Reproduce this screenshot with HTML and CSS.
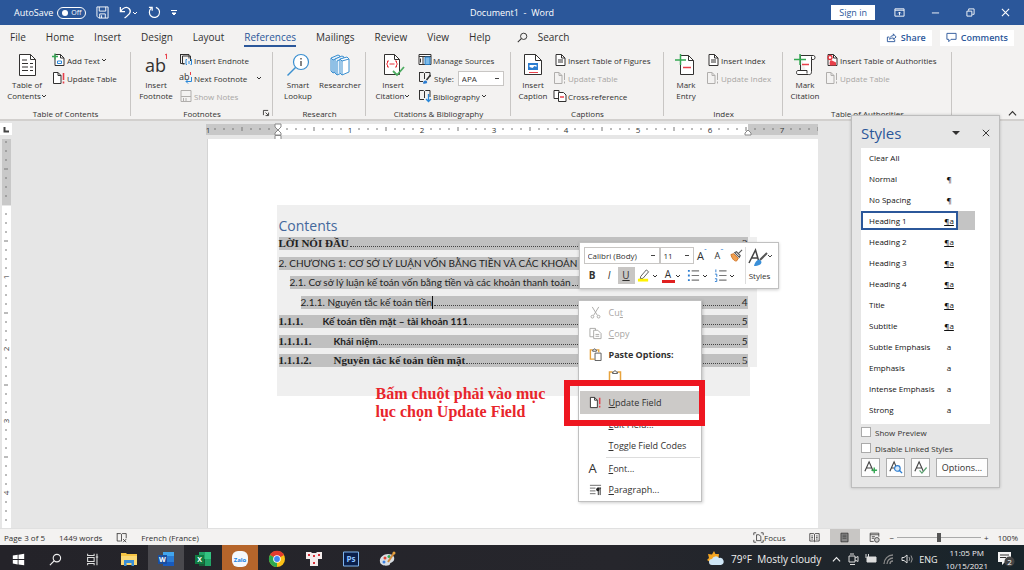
FILE: index.html
```html
<!DOCTYPE html>
<html lang="en">
<head>
<meta charset="utf-8">
<title>Document1 - Word</title>
<link rel="stylesheet" href="styles.css">
</head>
<body>
<svg class="defs" aria-hidden="true">
  <defs>
    <symbol id="doc" viewBox="0 0 14 14"><path d="M3 1.500h5.500L12 5v7.500H3z" fill="#fff" stroke="currentColor"/><path d="M8.500 1.500V5H12" fill="none" stroke="currentColor"/></symbol>
    <symbol id="doc-lines" viewBox="0 0 14 14"><use href="#doc"/><path d="M5 7h5M5 9h5" stroke="currentColor"/></symbol>
    <symbol id="doc-plus" viewBox="0 0 14 14"><use href="#doc"/><path d="M5.500 8h4v2.500h-4z" fill="none" stroke="#2b88d8"/><path d="M0 3.500h6M3 .5v6" stroke="#35a853" stroke-width="1.300"/></symbol>
    <symbol id="doc-update" viewBox="0 0 14 14"><path d="M1.500 1.500h4.500L9 4.500v8H1.500z" fill="#fff" stroke="currentColor"/><path d="M6 1.500v3h3" fill="none" stroke="currentColor"/><path d="M11.500 2v7M11.500 10.500v2" stroke="#e8404a" stroke-width="1.600"/></symbol>
    <symbol id="doc-update-off" viewBox="0 0 14 14"><path d="M1.500 1.500h4.500L9 4.500v8H1.500zM6 1.500v3h3M11.500 2v7M11.500 10.500v2" fill="none" stroke="#b0aeac"/></symbol>
    <symbol id="endnote" viewBox="0 0 14 14"><path d="M1 1.500h9v4M1.500 1v9.500h4M3.500 3h8v5M3.500 3v8h2" fill="none" stroke="currentColor"/><path d="M8 6.500H7v5h1M11.500 6.500h1v5h-1M10 8v3" fill="none" stroke="#2b88d8"/></symbol>
    <symbol id="nextnote" viewBox="0 0 14 14"><text x="0" y="9" font-size="9" fill="currentColor">ab</text><path d="M11.500 1v3" stroke="#e8404a"/><path d="M12.500 6v4.500H7M9 8.500l-2 2 2 2" fill="none" stroke="#2b88d8"/></symbol>
    <symbol id="shownotes" viewBox="0 0 14 14"><path d="M2 1.500h10v11H2zM2 7.500h10M4.500 9v3M7 9v3" fill="none" stroke="#b0aeac"/></symbol>
    <symbol id="manage" viewBox="0 0 14 14"><path d="M1 1.500h12v10H1zM1 3.500h12M5 3.500v8" fill="#fff" stroke="currentColor"/><path d="M7 4h5v7.500H7z" fill="#7cbbea" stroke="#2b7cc0"/><path d="M2.500 5.500v4" stroke="currentColor"/></symbol>
    <symbol id="style" viewBox="0 0 14 14"><path d="M1 1.500h4.500l1 1 1-1H12V6M1.500 1.500v9H5M6.500 2.500V8" fill="none" stroke="currentColor"/><path d="M12.500 4l-4 5" stroke="currentColor" stroke-width="1.500"/><path d="M5 12.500c0-3 3-4 4-2s-2 2.500-4 2z" fill="#2b7cd0"/></symbol>
    <symbol id="biblio" viewBox="0 0 14 14"><path d="M1 1.500h4.500l1 1 1-1H12V8M1.500 1.500v9H6M6.500 2.500V9" fill="none" stroke="currentColor"/><path d="M10.500 5v7.500M8 10l2.500 2.500L13 10" fill="none" stroke="#2b88d8" stroke-width="1.300"/></symbol>
    <symbol id="crossref" viewBox="0 0 14 14"><path d="M1 1.500h5v8H1z" fill="#fff" stroke="currentColor"/><path d="M5.500 3.500h5L13 6v6.500H5.500z" fill="#fff" stroke="currentColor"/><path d="M7 8h4" stroke="#e8404a" stroke-width="1.500"/></symbol>
    <symbol id="toa" viewBox="0 0 14 14"><use href="#doc"/><circle cx="5" cy="4.500" r="2" fill="none" stroke="#e8303a" stroke-width="1.300"/><path d="M5 12.500c-1-3 0-6 2-5l4 2v3z" fill="#e8404a"/></symbol>
    <symbol id="toc-big" viewBox="0 0 24 24"><path d="M4.500 1.500h11l5 5v16h-16z" fill="#fff" stroke="currentColor"/><path d="M15.500 1.500v5h5" fill="none" stroke="currentColor"/><path d="M7 7h5M7 10.500h6M7 14h6M7 17.500h6M15 10.500h3M15 14h3M15 17.500h3" stroke="currentColor"/></symbol>
    <symbol id="lens-big" viewBox="0 0 24 24"><circle cx="15" cy="9" r="7.500" fill="#fff" stroke="#3a8fd0" stroke-width="1.200"/><path d="M9.500 14.500L1.500 22.500" stroke="#3a8fd0" stroke-width="1.500"/><path d="M15 8v5M15 5v1.500" stroke="currentColor" stroke-width="1.200"/></symbol>
    <symbol id="books-big" viewBox="0 0 24 24"><path d="M3 5l7-3 2 1v14l-7 3-2-2zM3 5l2 2v13M5 7l7-3" fill="#e5f1fb" stroke="#3a8fd0"/><path d="M7 6l7-3 2 1v15l-7 3-2-2zM9 8v14M9 8l7-3" fill="#e5f1fb" stroke="#3a8fd0"/><path d="M12 6l7-2 2 2v13l-7 3-2-2zM12 6l2 2v14M14 8l7-2" fill="#fff" stroke="#3a8fd0"/></symbol>
    <symbol id="cite-big" viewBox="0 0 24 24"><path d="M3.500 1.500h10l5 5v15h-15z" fill="#fff" stroke="currentColor"/><path d="M13.500 1.500v5h5" fill="none" stroke="currentColor"/><path d="M8 8H6.500v2l-1 1 1 1v2H8M14 8h1.500v2l1 1-1 1v2H14M8.500 11h5" fill="none" stroke="#e8303a"/><path d="M12 18l4 4 7-8" fill="none" stroke="#4cab60" stroke-width="1.800"/></symbol>
    <symbol id="caption-big" viewBox="0 0 24 24"><path d="M3.500 1.500h11l6 6v14h-17z" fill="#fff" stroke="currentColor"/><path d="M14.500 1.500v6h6" fill="none" stroke="currentColor"/><path d="M7 10h10v7H7z" fill="#2b7cd0"/><path d="M8.500 12h7v2l-2-1-2 2-3-1z" fill="#fff"/><path d="M8 19.500h9" stroke="#e8404a"/></symbol>
    <symbol id="entry-big" viewBox="0 0 24 24"><path d="M6.500 2.500h8l5 5v14h-13z" fill="#fff" stroke="currentColor"/><path d="M14.500 2.500v5h5" fill="none" stroke="currentColor"/><path d="M9 14.500h8" stroke="#e8404a" stroke-width="1.500"/><path d="M1 7h11M6.500 1v11" stroke="#35a853" stroke-width="1.500"/></symbol>
    <symbol id="scroll-big" viewBox="0 0 24 24"><path d="M7.500 2.500h13c2 0 2 4 0 4h-2v12c0 4-3 3-3 3H5c-2 0-2-4 0-4h9v3M7.500 2.500v15M18.500 6.500v-3" fill="#fff" stroke="currentColor"/><path d="M9 11.500h7" stroke="#e8404a" stroke-width="1.500"/><path d="M1 6.500h12M7 1v11" stroke="#35a853" stroke-width="1.500"/></symbol>
    <symbol id="search" viewBox="0 0 14 14"><circle cx="8.500" cy="5.500" r="4" fill="none" stroke="currentColor" stroke-width="1.200"/><path d="M5.500 8.500L1 13" stroke="currentColor" stroke-width="1.300"/></symbol>
    <symbol id="save" viewBox="0 0 14 14"><path d="M1 1h12v12H3l-2-2zM3.500 1v4.500h7V1M4 13V8.500h6V13M6 10v3" fill="none" stroke="currentColor"/></symbol>
    <symbol id="undo" viewBox="0 0 14 14"><path d="M1.500 1v5h5M1.500 6C4 2 8 0 11 3c3 3.500 0 6-5 10" fill="none" stroke="currentColor" stroke-width="1.400"/></symbol>
    <symbol id="redo" viewBox="0 0 14 14"><path d="M8.500 1.500a5.500 5.500 0 1 1-5 1M1 1.500h3.500V5" fill="none" stroke="currentColor" stroke-width="1.300"/></symbol>
    <symbol id="caret" viewBox="0 0 6 6"><path d="M1 2l2 2 2-2" fill="none" stroke="currentColor"/></symbol>
    <symbol id="up" viewBox="0 0 10 10"><path d="M1 7l4-4 4 4" fill="none" stroke="currentColor" stroke-width="1.300"/></symbol>
    <symbol id="close" viewBox="0 0 10 10"><path d="M1 1l8 8M9 1L1 9" stroke="currentColor" stroke-width="1.200"/></symbol>
    <symbol id="minus" viewBox="0 0 10 10"><path d="M1 5.500h8" stroke="currentColor"/></symbol>
    <symbol id="restore" viewBox="0 0 10 10"><path d="M1 3.500h5.500v5.500H1zM3 3V1h6v6H7" fill="none" stroke="currentColor"/></symbol>
    <symbol id="display" viewBox="0 0 12 10"><path d="M1 1h10v8H1zM1 2.500h10M6 8V4.500M4.500 6L6 4.500 7.500 6" fill="none" stroke="currentColor"/></symbol>
    <symbol id="share" viewBox="0 0 12 12"><path d="M3.500 5.500H1.500v5h8V8M4 8c0-3 2-4 4-4V2l3 3.500L8 8V6.500C6 6.500 5 7 4 8z" fill="none" stroke="currentColor"/></symbol>
    <symbol id="comment" viewBox="0 0 12 12"><path d="M1 1.500h10v6.500H5.500L3 10.500V8H1z" fill="none" stroke="currentColor"/></symbol>
    <symbol id="cut" viewBox="0 0 14 14"><path d="M3.500 1l5.500 9M10.500 1L5 10" stroke="currentColor"/><circle cx="3.700" cy="11.500" r="1.500" fill="none" stroke="currentColor"/><circle cx="10.300" cy="11.500" r="1.500" fill="none" stroke="currentColor"/></symbol>
    <symbol id="copy" viewBox="0 0 14 14"><path d="M1 1.500h6v9H1z" fill="#fff" stroke="currentColor"/><path d="M5 3.500h4.500L13 7v5.500H5zM7 8h4M7 10h4" fill="#fff" stroke="currentColor"/></symbol>
    <symbol id="paste" viewBox="0 0 14 14"><path d="M4 2H1.500v10H6M8 2h2.500v2.500" fill="none" stroke="#e8a33d" stroke-width="1.500"/><path d="M4 3.500V2h1c0-1.500 2-1.500 2 0h1v1.500z" fill="#fff" stroke="#555"/><path d="M6.500 5.500H13v8H6.500z" fill="#fff" stroke="#555"/></symbol>
    <symbol id="clip" viewBox="0 0 14 14"><path d="M4.500 3H1.500v10h11V3h-3" fill="#fff" stroke="#e8a33d" stroke-width="1.500"/><path d="M4.500 4.500V3H6c0-2 2-2 2 0h1.500v1.500z" fill="#fff" stroke="#666"/></symbol>
    <symbol id="para" viewBox="0 0 14 14"><path d="M1 2.500h12M1 5.500h6M1 8.500h6M1 11.500h6" stroke="#666"/><path d="M10 5v8M12 5v8M9 5.500h4" stroke="#222"/><circle cx="9.500" cy="7" r="1.800" fill="#222"/></symbol>
    <symbol id="brush" viewBox="0 0 14 14"><path d="M1 6l3-1 5 5-2 3c-3 0-5-3-6-7z" fill="#f0a050" stroke="#d07020"/><path d="M5 4l5 5 1-2-4-4zM9 5l4-4" fill="#fff" stroke="#555" stroke-width="1.200"/></symbol>
    <symbol id="pen" viewBox="0 0 14 14"><path d="M4 8l6-7 2.500 2-6 7-3 .5z" fill="#fff" stroke="#555"/><path d="M1 12h11" stroke="#fff200" stroke-width="3"/></symbol>
    <symbol id="bullets" viewBox="0 0 14 14"><path d="M5 2h8M5 7h8M5 12h8" stroke="#777" stroke-width="1.200"/><path d="M1 2h2M1 7h2M1 12h2" stroke="#2b7cd0" stroke-width="2"/></symbol>
    <symbol id="numbers" viewBox="0 0 14 14"><path d="M5.500 2h8M5.500 7h8M5.500 12h8" stroke="#777" stroke-width="1.200"/><path d="M2 .5v3M1 5.500h2v3M1 10.500h2v3H1" fill="none" stroke="#2b7cd0"/></symbol>
    <symbol id="proof" viewBox="0 0 14 14"><path d="M1 2h5l1 1 1-1h5v6M1.500 2v9.500H6M7 3v9M9 9l4 4M13 9l-4 4" fill="none" stroke="currentColor"/></symbol>
    <symbol id="focus" viewBox="0 0 14 14"><path d="M1 4V1h3M10 1h3v3M13 10v3h-3M4 13H1v-3M4.500 3.500h3l2.500 2v5.500H4.500z" fill="none" stroke="currentColor"/></symbol>
    <symbol id="read" viewBox="0 0 14 14"><path d="M1 2h5l1 1 1-1h5v9.500H8l-1 1-1-1H1zM7 3v9M3 5h2M3 7h2M3 9h2M9 5h2M9 7h2M9 9h2" fill="none" stroke="currentColor"/></symbol>
    <symbol id="print" viewBox="0 0 14 14"><path d="M2.500 1.500h9v11h-9z" fill="#888" stroke="currentColor"/><path d="M4.500 4h5M4.500 6h5M4.500 8h5" stroke="#444"/></symbol>
    <symbol id="web" viewBox="0 0 14 14"><path d="M6 12H1.500V1.500h11V6M1.500 3.500h11M3.500 6h4M3.500 8h3" fill="none" stroke="currentColor"/><circle cx="10" cy="10" r="3" fill="#ccc" stroke="currentColor"/></symbol>
  </defs>
</svg>

<div class="app">
  <header class="titlebar">
    <div class="quick">
      <label class="autosave">AutoSave <input type="checkbox" class="switch"><span class="track">Off</span></label>
      <button aria-label="Save"><svg class="i13"><use href="#save"/></svg></button>
      <button aria-label="Undo"><svg class="i13"><use href="#undo"/></svg><svg class="caret"><use href="#caret"/></svg></button>
      <button aria-label="Redo"><svg class="i13"><use href="#redo"/></svg></button>
      <button aria-label="Customize"><svg class="caret" viewBox="0 0 6 6"><path d="M0 .5h6M1 3l2 2 2-2z" fill="currentColor" stroke="currentColor"/></svg></button>
    </div>
    <div class="doc-title">Document1&nbsp; -&nbsp; Word</div>
    <div class="window-tools">
      <button class="signin">Sign in</button>
      <button aria-label="Ribbon display"><svg class="i11"><use href="#display"/></svg></button>
      <button aria-label="Minimize"><svg class="i9"><use href="#minus"/></svg></button>
      <button aria-label="Restore"><svg class="i9"><use href="#restore"/></svg></button>
      <button aria-label="Close"><svg class="i9"><use href="#close"/></svg></button>
    </div>
  </header>

  <nav class="tabs">
    <button>File</button><button>Home</button><button>Insert</button><button>Design</button><button>Layout</button><button class="active">References</button><button>Mailings</button><button>Review</button><button>View</button><button>Help</button>
    <button class="search"><svg class="i11"><use href="#search"/></svg>Search</button>
    <div class="tab-actions">
      <button><svg class="i11"><use href="#share"/></svg>Share</button>
      <button><svg class="i11"><use href="#comment"/></svg>Comments</button>
    </div>
  </nav>

  <section class="ribbon">
    <div class="group">
      <div class="tools">
        <button class="big wide-tool"><svg><use href="#toc-big"/></svg><span>Table of</span><span>Contents<svg class="caret"><use href="#caret"/></svg></span></button>
        <div class="list">
          <button><svg class="i14"><use href="#doc-plus"/></svg>Add Text<svg class="caret"><use href="#caret"/></svg></button>
          <button><svg class="i14"><use href="#doc-update"/></svg>Update Table</button>
        </div>
      </div>
      <h2>Table of Contents</h2>
    </div>
    <div class="group">
      <div class="tools">
        <button class="big"><svg viewBox="0 0 24 24"><text x="1" y="19" font-size="18" fill="currentColor">ab</text><path d="M22.500 1v5M21 2l1.500-1" stroke="#e8404a"/></svg><span>Insert</span><span>Footnote</span></button>
        <div class="list">
          <button><svg class="i14"><use href="#endnote"/></svg>Insert Endnote</button>
          <button><svg class="i14"><use href="#nextnote"/></svg>Next Footnote<svg class="caret far"><use href="#caret"/></svg></button>
          <button disabled><svg class="i14"><use href="#shownotes"/></svg>Show Notes</button>
        </div>
      </div>
      <h2>Footnotes</h2>
      <svg class="launcher" viewBox="0 0 7 7"><path d="M.5 6V.5H6M3 3l3 3M6.500 3v3.500H3" fill="none" stroke="currentColor"/></svg>
    </div>
    <div class="group">
      <div class="tools snug">
        <button class="big"><svg><use href="#lens-big"/></svg><span>Smart</span><span>Lookup</span></button>
        <button class="big"><svg><use href="#books-big"/></svg><span>Researcher</span></button>
      </div>
      <h2>Research</h2>
    </div>
    <div class="group">
      <div class="tools">
        <button class="big wide-tool"><svg><use href="#cite-big"/></svg><span>Insert</span><span>Citation<svg class="caret"><use href="#caret"/></svg></span></button>
        <div class="list">
          <button><svg class="i14"><use href="#manage"/></svg>Manage Sources</button>
          <div class="style-row"><svg class="i14"><use href="#style"/></svg><label for="cite-style">Style:</label><select id="cite-style"><option>APA</option></select></div>
          <button><svg class="i14"><use href="#biblio"/></svg>Bibliography<svg class="caret"><use href="#caret"/></svg></button>
        </div>
      </div>
      <h2>Citations &amp; Bibliography</h2>
    </div>
    <div class="group">
      <div class="tools">
        <button class="big narrow-tool"><svg><use href="#caption-big"/></svg><span>Insert</span><span>Caption</span></button>
        <div class="list">
          <button><svg class="i14"><use href="#doc-lines"/></svg>Insert Table of Figures</button>
          <button disabled><svg class="i14"><use href="#doc-update-off"/></svg>Update Table</button>
          <button><svg class="i14"><use href="#crossref"/></svg>Cross-reference</button>
        </div>
      </div>
      <h2>Captions</h2>
    </div>
    <div class="group">
      <div class="tools">
        <button class="big narrow-tool"><svg><use href="#entry-big"/></svg><span>Mark</span><span>Entry</span></button>
        <div class="list">
          <button><svg class="i14"><use href="#doc-lines"/></svg>Insert Index</button>
          <button disabled><svg class="i14"><use href="#doc-update-off"/></svg>Update Index</button>
        </div>
      </div>
      <h2>Index</h2>
    </div>
    <div class="group">
      <div class="tools">
        <button class="big narrow-tool"><svg><use href="#scroll-big"/></svg><span>Mark</span><span>Citation</span></button>
        <div class="list">
          <button><svg class="i14"><use href="#toa"/></svg>Insert Table of Authorities</button>
          <button disabled><svg class="i14"><use href="#doc-update-off"/></svg>Update Table</button>
        </div>
      </div>
      <h2>Table of Authorities</h2>
    </div>
    <button class="collapse" aria-label="Collapse ribbon"><svg class="i9"><use href="#up"/></svg></button>
  </section>

  <main class="workspace">
    <div class="ruler-row">
      <svg class="tabstop" viewBox="0 0 12 12"><path d="M4.500 4v4.500H9" fill="none" stroke="#444" stroke-width="2"/></svg>
      <svg class="hruler" viewBox="0 0 612 18">
        <defs><pattern id="ht" width="72" height="12" patternUnits="userSpaceOnUse"><path d="M9 5v2M18 5v2M27 5v2M36 4v4M45 5v2M54 5v2M63 5v2" stroke="#777"/></pattern></defs>
        <path d="M0 1h612v11H0z" fill="#c8c8c8"/><path d="M72 1h470v11H72z" fill="#fff"/>
        <path d="M0 0h612v12H0z" fill="url(#ht)"/>
        <g font-size="8" fill="#333" text-anchor="middle"><text x="2" y="10">1</text><text x="144" y="10">1</text><text x="216" y="10">2</text><text x="288" y="10">3</text><text x="360" y="10">4</text><text x="432" y="10">5</text><text x="504" y="10">6</text><text x="576" y="10">7</text></g>
        <path d="M69 1h6v3l-3 3-3-3zM69 12v-2l3-3 3 3v2zM69 12.500h6v4h-6zM539 12v-2l3-3 3 3v2z" fill="#fff" stroke="#888"/>
      </svg>
    </div>
    <div class="canvas">
      <svg class="vruler" viewBox="0 0 10 390" preserveAspectRatio="xMidYMin slice">
        <defs><pattern id="vt" y="-6" width="10" height="72" patternUnits="userSpaceOnUse"><path d="M4 9h2M4 18h2M4 27h2M3 36h4M4 45h2M4 54h2M4 63h2" stroke="#777"/></pattern></defs>
        <path d="M1 0h9v66H1z" fill="#c8c8c8"/><path d="M1 67h9v323H1z" fill="#fff"/><path d="M0 0h10v390H0z" fill="url(#vt)"/>
        <g font-size="8" fill="#333" text-anchor="middle"><text transform="translate(8 138) rotate(-90)">1</text><text transform="translate(8 210) rotate(-90)">2</text><text transform="translate(8 282) rotate(-90)">3</text><text transform="translate(8 354) rotate(-90)">4</text></g>
      </svg>
      <article class="page">
        <div class="contents">
          <h1>Contents</h1>
          <div class="toc">
            <div class="entry serif"><b>LỜI NÓI ĐẦU</b><i></i><span>3</span></div>
            <div class="entry"><span>2. CHƯƠNG 1: CƠ SỞ LÝ LUẬN VỐN BẰNG TIỀN VÀ CÁC KHOẢN THANH TOÁN</span><i></i><span>4</span></div>
            <div class="entry l2"><span>2.1. Cơ sở lý luận kế toán vốn bằng tiền và các khoản thanh toán</span><i></i><span>4</span></div>
            <div class="entry l3"><span class="cursor">2.1.1. Nguyên tắc kế toán tiền</span><i></i><span>4</span></div>
            <div class="entry"><b class="num serif">1.1.1.</b><b>Kế toán tiền mặt – tài khoản 111</b><i></i><span>5</span></div>
            <div class="entry"><b class="num wide serif">1.1.1.1.</b><b>Khái niệm</b><i></i><span>5</span></div>
            <div class="entry serif"><b class="num wide">1.1.1.2.</b><b>Nguyên tắc kế toán tiền mặt</b><i></i><span>5</span></div>
          </div>
        </div>
        <p class="note">Bấm chuột phải vào mục<br>lục chọn Update Field</p>

        <div class="mini">
          <div class="mini-main">
            <div class="mini-row">
              <select class="font" aria-label="Font"><option>Calibri (Body)</option></select><select class="size" aria-label="Font size"><option>11</option></select>
              <button class="grow">A<sup>ˆ</sup></button><button class="shrink">A<sup>ˇ</sup></button><button aria-label="Format painter"><svg class="i13"><use href="#brush"/></svg></button>
            </div>
            <div class="mini-row format">
              <button><b>B</b></button><button class="ital">I</button><button class="on"><u>U</u></button>
              <button aria-label="Highlight"><svg class="i13"><use href="#pen"/></svg></button><svg class="caret"><use href="#caret"/></svg>
              <button class="color">A</button><svg class="caret"><use href="#caret"/></svg>
              <button aria-label="Bullets"><svg class="i13"><use href="#bullets"/></svg></button><svg class="caret"><use href="#caret"/></svg>
              <button aria-label="Numbering"><svg class="i13"><use href="#numbers"/></svg></button><svg class="caret"><use href="#caret"/></svg>
            </div>
          </div>
          <button class="mini-styles"><svg viewBox="0 0 24 20"><path d="M1 15L7.500 2 11 14M4 10h6" fill="none" stroke="#444" stroke-width="1.500"/><path d="M19 5l-7 7" stroke="#555" stroke-width="2"/><path d="M6 18c1-5 5-8 7-5s-3 5-7 5z" fill="#3a8fd8"/><path d="M20 7l2 2 2-2" fill="none" stroke="#444"/></svg>Styles</button>
        </div>

        <div class="menu" role="menu">
          <button disabled><svg class="i13"><use href="#cut"/></svg><span>Cu<u>t</u></span></button>
          <button disabled><svg class="i13"><use href="#copy"/></svg><span><u>C</u>opy</span></button>
          <button class="bold"><svg class="i13"><use href="#paste"/></svg><span>Paste Options:</span></button>
          <button class="paste-opt" aria-label="Keep source formatting"><svg class="i14"><use href="#clip"/></svg></button>
          <button class="hot"><svg class="i13"><use href="#doc-update"/></svg><span><u>U</u>pdate Field</span></button>
          <button><span></span><span><u>E</u>dit Field...</span></button>
          <button><span></span><span><u>T</u>oggle Field Codes</span></button>
          <hr>
          <button><span class="bigA">A</span><span><u>F</u>ont...</span></button>
          <button><svg class="i13"><use href="#para"/></svg><span><u>P</u>aragraph...</span></button>
          <div class="frame"></div>
        </div>
      </article>
    </div>

    <aside class="pane">
      <header><h2>Styles</h2><button aria-label="Pane options"><svg viewBox="0 0 8 8"><path d="M0 2h8L4 6z" fill="currentColor"/></svg></button><button aria-label="Close pane"><svg class="i9"><use href="#close"/></svg></button></header>
      <ul>
        <li><span>Clear All</span></li>
        <li><span>Normal</span><em>¶</em></li>
        <li><span>No Spacing</span><em>¶</em></li>
        <li class="sel"><span>Heading 1</span><em><u>¶a</u></em></li>
        <li><span>Heading 2</span><em><u>¶a</u></em></li>
        <li><span>Heading 3</span><em><u>¶a</u></em></li>
        <li><span>Heading 4</span><em><u>¶a</u></em></li>
        <li><span>Title</span><em><u>¶a</u></em></li>
        <li><span>Subtitle</span><em><u>¶a</u></em></li>
        <li><span>Subtle Emphasis</span><em>a</em></li>
        <li><span>Emphasis</span><em>a</em></li>
        <li><span>Intense Emphasis</span><em>a</em></li>
        <li><span>Strong</span><em>a</em></li>
      </ul>
      <label><input type="checkbox">Show Preview</label>
      <label><input type="checkbox">Disable Linked Styles</label>
      <footer>
        <button aria-label="New style"><svg viewBox="0 0 16 16"><path d="M2 12L6.500 2 11 12M4 8.500h5" fill="none" stroke="#444" stroke-width="1.200"/><path d="M12 8v6M9 11h6" stroke="#35a853" stroke-width="1.500"/></svg></button>
        <button aria-label="Style inspector"><svg viewBox="0 0 16 16"><path d="M2 12L6.500 2 9 8M4 8.500h3" fill="none" stroke="#444" stroke-width="1.200"/><circle cx="10" cy="9" r="3" fill="#d8eafa" stroke="#2b7cd0" stroke-width="1.200"/><path d="M12 11l3 3" stroke="#2b7cd0" stroke-width="1.500"/></svg></button>
        <button aria-label="Manage styles"><svg viewBox="0 0 16 16"><path d="M2 12L6.500 2 11 12M4 8.500h5" fill="none" stroke="#444" stroke-width="1.200"/><path d="M7 11l2.500 3 5-6" fill="none" stroke="#5aa070" stroke-width="1.300"/></svg></button>
        <button class="options">Options...</button>
      </footer>
    </aside>
  </main>

  <div class="status">
    <span>Page 3 of 5</span><span>1449 words</span><svg class="i11"><use href="#proof"/></svg><span>French (France)</span>
    <div class="views">
      <button><svg class="i11"><use href="#focus"/></svg>Focus</button>
      <button class="view" aria-label="Read mode"><svg class="i11"><use href="#read"/></svg></button>
      <button class="view on" aria-label="Print layout"><svg class="i11"><use href="#print"/></svg></button>
      <button class="view" aria-label="Web layout"><svg class="i11"><use href="#web"/></svg></button>
      <span class="zoom"><span>−</span><input type="range" value="50" aria-label="Zoom"><span>+</span></span>
      <span>100%</span>
    </div>
  </div>

  <footer class="taskbar">
    <button aria-label="Start"><svg viewBox="0 0 16 16"><path d="M1 3l6-1v5.500H1zM8 2l7-1v6.500H8zM1 8.500h6V14l-6-1zM8 8.500h7V15l-7-1z" fill="#fff"/></svg></button>
    <button aria-label="Search"><svg><use href="#search"/></svg></button>
    <button aria-label="Task view"><svg viewBox="0 0 16 16"><path d="M2 1v2h8V1M2 5.500h8v5H2zM2 15v-2h8v2M13.500 1v14M12 5h3" fill="none" stroke="#ddd" stroke-width="1.300"/></svg></button>
    <button aria-label="Explorer"><svg viewBox="0 0 16 16"><path d="M0 2h5l1 1h10v11H0z" fill="#f6c443"/><path d="M0 5h16v9H0z" fill="#fbd975"/><path d="M3 15V9h10v6h-2.500v-3h-5v3z" fill="#3a8fd8"/></svg></button>
    <button class="open" aria-label="Word"><svg viewBox="0 0 16 16"><path d="M5 1h11v14H5z" fill="#2b7cd3"/><path d="M5 1h11v4H5z" fill="#41a5ee"/><path d="M5 11h11v4H5z" fill="#185abd"/><path d="M0 4h9v9H0z" fill="#1a4fa0"/><text x="4.500" y="11" font-size="7" font-weight="700" fill="#fff" text-anchor="middle">W</text></svg></button>
    <button aria-label="Excel"><svg viewBox="0 0 16 16"><path d="M4 1h12v14H4z" fill="#21a366"/><path d="M10 1h6v7h-6z" fill="#33c481"/><path d="M4 8h6v7H4z" fill="#185c37"/><path d="M0 4h9v9H0z" fill="#107c41"/><text x="4.500" y="11" font-size="7" font-weight="700" fill="#fff" text-anchor="middle">X</text></svg></button>
    <button class="alert" aria-label="Zalo"><svg viewBox="0 0 16 16"><rect width="16" height="16" rx="6" fill="#f4f8fc"/><text x="8" y="10.500" font-size="6" font-weight="700" fill="#1a80e0" text-anchor="middle">Zalo</text></svg></button>
    <button aria-label="Chrome"><svg viewBox="0 0 16 16"><circle cx="8" cy="8" r="8" fill="#fbc116"/><path d="M8 8L1 4a8 8 0 0 1 14 0z" fill="#e33b2e"/><path d="M8 8v8A8 8 0 0 1 1 4z" fill="#2da94f"/><circle cx="8" cy="8" r="3.800" fill="#fff"/><circle cx="8" cy="8" r="2.900" fill="#4285f4"/></svg></button>
    <button aria-label="Unikey"><svg viewBox="0 0 16 16"><path d="M0 1h5.500v7H0zM5.500 2h5v6h-5zM10.500 1H16v7h-5.500zM4 8h8v7H4z" fill="#f4ecec"/><path d="M2 3h2v2H2zM7 4h2v2H7zM12 3h2v2h-2zM7 11h2v2H7z" fill="#d9303a"/></svg></button>
    <button aria-label="Photoshop"><svg viewBox="0 0 16 16"><path d="M.5 1h15v14H.5z" fill="#0a1f4a" stroke="#7db4ee"/><text x="8" y="11" font-size="8" font-weight="700" fill="#8cc4ff" text-anchor="middle">Ps</text></svg></button>
    <button aria-label="Paint"><svg viewBox="0 0 16 16"><path d="M8 3c5 0 7 3 6 6s-4 2-4 4-9 3-10-2 4-8 8-8z" fill="#d8dde2"/><circle cx="5" cy="7" r="1.500" fill="#e04030"/><circle cx="9" cy="5.500" r="1.500" fill="#35a853"/><circle cx="4" cy="11" r="1.500" fill="#3a80e0"/><path d="M8 11l6-9" stroke="#d08a3a" stroke-width="2"/><circle cx="14" cy="2" r="1.500" fill="#e8a33d"/></svg></button>
    <div class="tray">
      <span class="weather"><svg viewBox="0 0 18 16"><path d="M7 0l1.500 3L12 3l-1 8H3L0 9l2-2-1-4 4 .5z" fill="#f5a623"/><path d="M5 14a3 3 0 0 1 0-6 4 4 0 0 1 7-1 3.500 3.500 0 0 1 2 7z" fill="#cfe6f6"/></svg>79°F&nbsp; Mostly cloudy</span>
      <svg class="i9"><use href="#up"/></svg>
      <svg class="i12" viewBox="0 0 12 12"><path d="M2 3h6v6H2zM8 5l3-1.500v5L8 7M3 1h4M3 11.500h5" fill="none" stroke="#ddd"/></svg>
      <svg class="i12" viewBox="0 0 12 12"><path d="M2 4h9v5H2z" fill="#ddd" stroke="#ddd"/><path d="M1 1v4M3.500 1v3" stroke="#ddd"/></svg>
      <svg class="i12" viewBox="0 0 12 12"><path d="M1 11a9 9 0 0 1 9-9M4 11a6 6 0 0 1 6-6M7 11a3 3 0 0 1 3-3" fill="none" stroke="#888" stroke-width="1.300"/></svg>
      <svg class="i12" viewBox="0 0 12 12"><path d="M1 4.500h2L6 2v8L3 7.500H1z" fill="none" stroke="#ddd"/><path d="M8 4q1.500 2 0 4M10 2.500q2.500 3.500 0 7" fill="none" stroke="#999"/></svg>
      <span class="lang">ENG</span>
      <span class="clock">11:05 PM<br>10/15/2021</span>
      <svg class="notice" viewBox="0 0 18 16"><path d="M1 1h13v10H8l-3 3v-3H1z" fill="#f4f4f4"/><path d="M3 4h9M3 6.500h6" stroke="#333"/><circle cx="12.500" cy="10.500" r="5" fill="#444"/><text x="12.500" y="13.500" font-size="8" fill="#fff" text-anchor="middle">2</text></svg>
    </div>
  </footer>
</div>
</body>
</html>
```
FILE: styles.css
```css
* { box-sizing: border-box; }
body { margin: 0; font: 8px/11px "Open Sans", "Noto Sans", sans-serif; color: #323130; }
button, select, input { font: inherit; color: inherit; }
button { display: flex; align-items: center; padding: 0; border: 0; background: none; white-space: nowrap; }
h1, h2, ul, p { margin: 0; padding: 0; font-weight: 400; }
svg { display: block; flex: none; overflow: visible; }
.defs { position: absolute; width: 0; height: 0; }
.i9 { width: 9px; height: 9px; }
.i11 { width: 11px; height: 11px; }
.i12 { width: 12px; height: 12px; }
.i13 { width: 13px; height: 13px; }
.i14 { width: 14px; height: 14px; }
.caret { width: 6px; height: 6px; }

.app { display: flex; flex-direction: column; height: 100vh; overflow: hidden; }

/* title bar */
.titlebar { display: grid; grid-template-columns: 1fr auto 1fr; align-items: center; flex: none; height: 25px; padding: 0 14px; background: #2b579a; color: #fff; font-size: 9px; }
.quick { display: flex; align-items: center; gap: 10px; }
.autosave { display: flex; align-items: center; gap: 4px; }
.switch { position: absolute; opacity: 0; }
.track { display: flex; align-items: center; gap: 3px; height: 12px; width: 29px; padding-left: 4px; border: 1px solid #fff; border-radius: 6px; font-size: 7px; }
.track::before { content: ""; width: 6px; height: 6px; border-radius: 3px; background: #fff; }
.window-tools { display: flex; align-items: center; justify-content: flex-end; gap: 26px; }
.signin { height: 15px; padding: 0 8px; background: #fff; color: #2b579a; margin-right: -7px; }

/* tabs */
.tabs { display: flex; align-items: center; gap: 20px; flex: none; height: 25px; padding: 0 10px; background: #f3f2f1; font-size: 10px; }
.tabs button { height: 19px; }
.tabs .active { border-bottom: 2px solid #2b579a; border-top: 2px solid transparent; color: #2b579a; }
.tabs .search { gap: 10px; margin-left: 6px; }
.tab-actions { display: flex; gap: 8px; margin-left: auto; color: #2b579a; font-size: 9px; font-weight: 600; }
.tab-actions button { height: 16px; gap: 4px; padding: 0 6px; background: #fff; }

/* ribbon */
.ribbon { display: grid; grid-template-columns: 131px 142px 93px 145px 153px 119px 169px 1fr; flex: none; height: 71px; background: #f3f2f1; border-bottom: 2px solid #d2d0ce; }
.group { position: relative; display: flex; flex-direction: column; justify-content: space-between; padding: 1px 4px 0; }
.group::after { content: ""; position: absolute; right: 0; top: 2px; bottom: 3px; width: 1px; background: #c8c6c4; }
.group h2 { font-size: 8px; line-height: 11px; text-align: center; }
.tools { display: flex; gap: 2px; }
.snug { gap: 0; }
.big { flex-direction: column; min-width: 42px; padding-top: 2px; }
.wide-tool { min-width: 46px; }
.narrow-tool { min-width: 36px; }
.big > svg { width: 24px; height: 24px; margin-bottom: 2px; }
.big > span { display: flex; align-items: center; }
.list { display: flex; flex-direction: column; }
.list button, .style-row { display: flex; align-items: center; gap: 1px; height: 18px; }
.list button:disabled, .menu button:disabled { color: #a8a6a4; }
.far { margin-left: 8px; }
.style-row { gap: 2px; }
.style-row select { width: 46px; height: 15px; margin-left: 2px; }
select { appearance: none; padding: 0 3px; border: 1px solid #c8c6c4; border-radius: 0; background: #fff linear-gradient(#444, #444) no-repeat right 4px center / 4px 1px; }
.launcher { position: absolute; right: 4px; bottom: 3px; width: 6px; height: 6px; }
.collapse { align-self: end; justify-self: end; padding: 0 7px 1px 0; }

/* workspace */
.workspace { position: relative; display: flex; flex-direction: column; flex: 1; min-height: 0; background: #e6e6e6; }
.ruler-row { display: flex; flex: none; height: 18px; padding-top: 2px; }
.tabstop { width: 12px; height: 12px; background: #fff; }
.hruler { width: 612px; height: 18px; margin: 0 auto; }
.ruler-row::after { content: ""; width: 12px; }
.canvas { display: flex; flex: 1; min-height: 0; }
.vruler { width: 10px; height: 100%; margin-left: 1px; overflow: hidden; }
.page { position: relative; width: 611px; margin: 0 auto; padding: 66px 68px 0 69px; background: #fff; border-left: 1px solid #d4d4d4; }
.canvas::after { content: ""; width: 11px; }
.contents { height: 191px; padding: 12px 2px 0; background: #efefef; }
.contents h1 { margin-bottom: 2px; color: #44689c; font-size: 14px; line-height: 18px; }
.toc { display: flex; flex-direction: column; justify-content: space-between; height: 130px; margin-right: -9px; padding-right: 9px; background: #efefef; font: 10px/13px Lato, "Open Sans", sans-serif; color: #222; }
.entry { display: flex; background: #c0c0c0; white-space: nowrap; }
.entry i { flex: 1; margin: 0 2px 3px 1px; border-bottom: 1px dotted #444; }
.l2 { margin-left: 11px; }
.l3 { margin-left: 22px; }
.num { width: 44px; }
.wide { width: 55px; }
.serif { font-family: "Liberation Serif", serif; font-size: 11px; }
.cursor { border-right: 1px solid #111; }
.note { position: absolute; left: 168px; top: 246px; color: #e8252b; font: bold 16px/18px "Liberation Serif", serif; white-space: nowrap; }

/* floating formatting bar */
.mini { position: absolute; left: 371px; top: 103px; display: flex; width: 200px; height: 47px; padding: 4px; background: #fff; border: 1px solid #c0c0c0; box-shadow: 0 1px 3px #0003; }
.mini-main { flex: 1; border-right: 1px solid #ddd; }
.mini-row { display: flex; align-items: center; height: 17px; }
.font { width: 76px; height: 17px; }
.size { width: 34px; height: 17px; }
.mini-row button { justify-content: center; width: 17px; height: 17px; font-size: 11px; }
.mini-row sup { color: #2b7cd0; font-size: 8px; line-height: 8px; align-self: flex-start; }
.mini-row .shrink { font-size: 9px; }
.format { margin-top: 3px; }
.mini-row.format button { font-size: 10px; }
.format .caret { margin-right: 4px; }
.format .ital { font-style: italic; }
.format .on { background: #c8c6c4; }
.mini-row .color { height: 14px; width: 13px; border-bottom: 3px solid #e02020; line-height: 10px; }
.mini-styles { flex-direction: column; justify-content: space-between; width: 31px; padding: 1px 0 3px; }
.mini-styles svg { width: 24px; height: 20px; }

/* context menu */
.menu { position: absolute; left: 370px; top: 161px; width: 124px; padding: 1px; background: #fff; border: 1px solid #c0c0c0; box-shadow: 1px 1px 3px #0003; font-size: 9px; }
.menu button { display: grid; grid-template-columns: 13px 1fr; gap: 7px; width: 100%; height: 21px; padding-left: 9px; text-align: left; }
.menu .bold { font-weight: 700; }
.menu .paste-opt { align-items: start; height: 26px; padding: 4px 0 0 28px; }
.menu .hot { height: 23px; background: #cccac8; }
.menu hr { margin: 1px 0 0 26px; border: 0; border-top: 1px solid #ddd; }
.bigA { font-size: 13px; }
.frame { position: absolute; left: -15px; top: 79px; width: 141px; height: 46px; border: 6px solid #ee1620; }

/* styles pane */
.pane { position: absolute; right: 24px; top: -6px; width: 149px; height: 373px; padding: 6px 9px 8px; background: #e6e6e6; border: 1px solid #bdbdbd; box-shadow: 0 0 3px #0003; }
.pane header { display: flex; align-items: center; gap: 22px; height: 21px; margin-bottom: 5px; }
.pane header h2 { flex: 1; color: #2b579a; font-size: 15px; line-height: 20px; }
.pane header button svg { width: 8px; height: 8px; }
.pane ul { list-style: none; padding: 0 13px 3px 0; background: #fff; }
.pane li { display: flex; align-items: center; justify-content: space-between; height: 21px; width: 97px; padding: 0 3px 2px 8px; color: #111; }
.pane em { width: 12px; font-style: normal; text-align: center; }
.pane .sel { height: 19px; margin: 0 0 2px; padding: 0 1px 0 6px; border: 2px solid #2b579a; box-shadow: 17px 0 0 #c4c4c4; }
.pane label { display: flex; align-items: center; gap: 4px; height: 16px; }
.pane input { appearance: none; width: 10px; height: 10px; margin: 0; background: #fff; border: 1px solid #aaa; }
.pane footer { display: flex; gap: 6px; margin-top: 2px; }
.pane footer button { justify-content: center; width: 19px; height: 19px; background: #fdfdfd; border: 1px solid #adadad; }
.pane footer svg { width: 15px; height: 15px; }
.pane footer .options { width: 52px; font-size: 9px; }

/* status bar */
.status { display: flex; align-items: center; gap: 14px; flex: none; height: 17px; padding: 0 6px 0 4px; background: #f3f2f1; border-top: 1px solid #e0e0e0; }
.views { display: flex; align-items: center; height: 100%; margin-left: auto; }
.views > button:first-child { margin-right: 14px; }
.view { justify-content: center; width: 30px; height: 100%; }
.view.on { background: #c8c6c4; }
.zoom { display: flex; align-items: center; gap: 3px; margin-right: 9px; }
.zoom input { appearance: none; width: 84px; height: 9px; margin: 0; background: linear-gradient(#aaa, #aaa) no-repeat center / 100% 1px; }
.zoom input::-webkit-slider-thumb { appearance: none; width: 4px; height: 9px; background: #555; }

/* taskbar */
.taskbar { display: flex; flex: none; height: 25px; background: linear-gradient(90deg, #242329, #26262c 60%, #18242a); color: #f0f0f0; }
.taskbar > button { justify-content: center; width: 36px; height: 100%; margin-right: 1px; padding-top: 3px; }
.taskbar > button svg { width: 16px; height: 16px; }
.taskbar > button:nth-child(-n+3) svg { width: 13px; height: 13px; }
.taskbar .open { background: #4a494e; }
.taskbar .alert { background: #b5652b; }
.tray { display: flex; align-items: center; gap: 6px; margin-left: auto; padding: 3px 9px 0 0; }
.weather { display: flex; align-items: center; gap: 6px; margin-right: 5px; font-size: 10px; }
.weather svg { width: 18px; height: 16px; }
.lang { font-size: 9px; }
.clock { text-align: center; font-size: 8px; line-height: 13px; margin-left: 2px; }
.notice { width: 18px; height: 16px; margin-left: 3px; }
```
